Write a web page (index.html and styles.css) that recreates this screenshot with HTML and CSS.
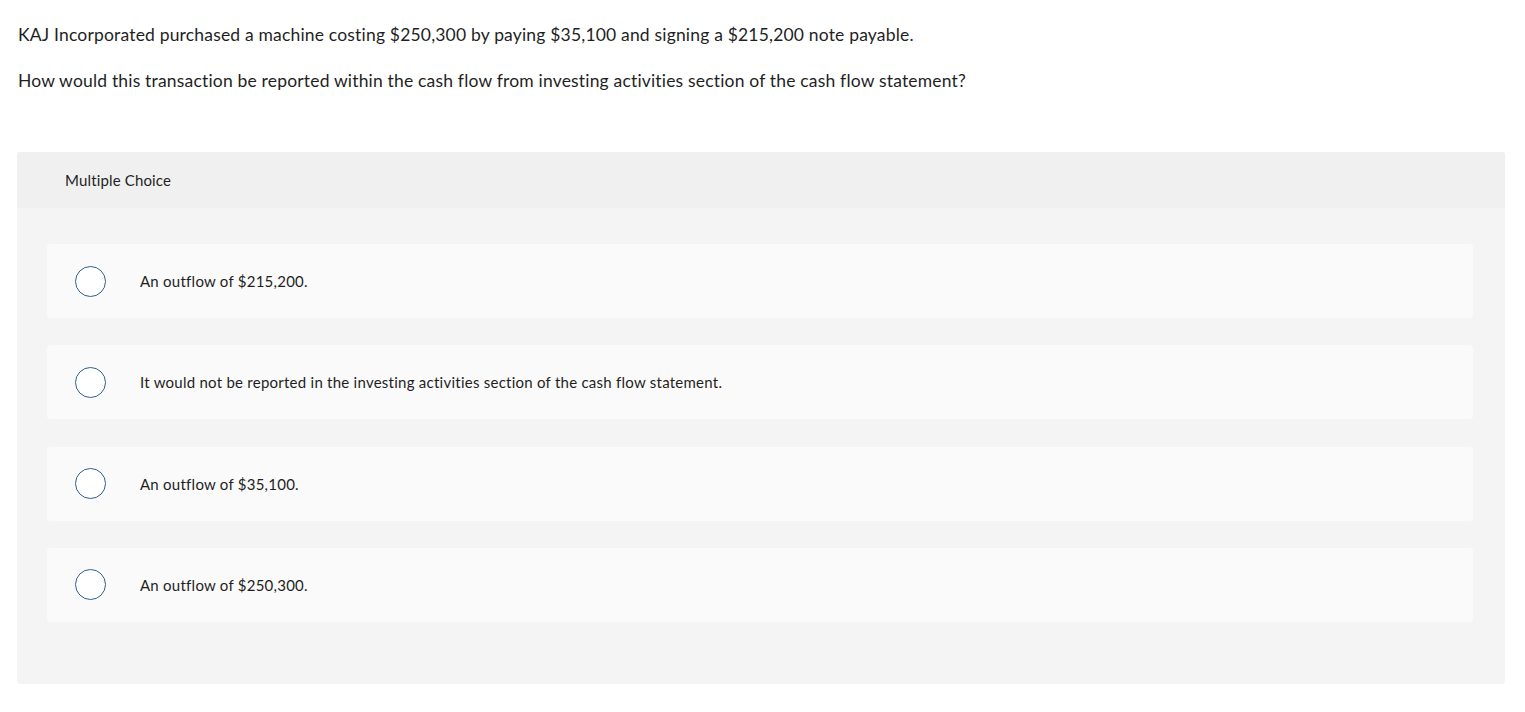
FILE: index.html
```html
<!DOCTYPE html>
<html>
<head>
<meta charset="utf-8">
<link rel="stylesheet" href="styles.css">
</head>
<body>
<div class="page">
  <div class="prompt">
    <p class="line">KAJ Incorporated purchased a machine costing $250,300 by paying $35,100 and signing a $215,200 note payable.</p>
    <p class="line">How would this transaction be reported within the cash flow from investing activities section of the cash flow statement?</p>
  </div>
  <div class="mc">
    <div class="mc-head">Multiple Choice</div>
    <div class="mc-body">
      <div class="opt"><span class="radio"></span><span class="opt-text">An outflow of $215,200.</span></div>
      <div class="opt"><span class="radio"></span><span class="opt-text">It would not be reported in the investing activities section of the cash flow statement.</span></div>
      <div class="opt"><span class="radio"></span><span class="opt-text">An outflow of $35,100.</span></div>
      <div class="opt"><span class="radio"></span><span class="opt-text">An outflow of $250,300.</span></div>
    </div>
  </div>
</div>
</body>
</html>
```
FILE: styles.css
```css
html, body { margin: 0; padding: 0; background: #fff; }
body { font-family: Lato, "Open Sans", sans-serif; color: #1f1f1f; }
.page { padding: 24px 20px 0 17px; }
.prompt { padding-left: 1px; }
.line { margin: 0; font-size: 17.5px; line-height: 22px; letter-spacing: 0.18px; }
.line + .line { margin-top: 24px; }
.mc { margin-top: 60px; background: #f4f4f4; border-radius: 3px; overflow: hidden; }
.mc-head { height: 56px; display: flex; align-items: center; padding-left: 48px; background: #f0f0f0; font-size: 15px; letter-spacing: 0.15px; }
.mc-body { padding: 36px 32px 62px 30px; display: flex; flex-direction: column; gap: 27.3px; }
.opt { height: 74px; background: #fafafa; border-radius: 3px; display: flex; align-items: center; padding-left: 28px; }
.radio { border: 1.5px solid #2f5f8f; border-radius: 50%; background: #fff; box-sizing: border-box; flex: none; width: 31px; height: 31px; }
.opt-text { margin-left: 34px; font-size: 15px; letter-spacing: 0.25px; }
```
